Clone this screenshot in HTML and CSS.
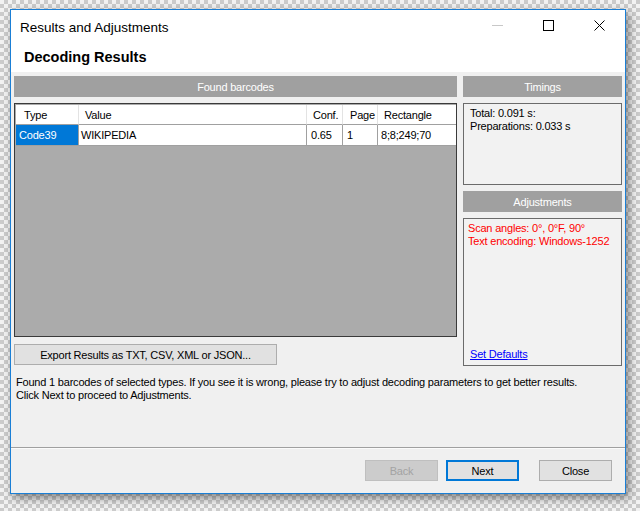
FILE: index.html
```html
<!DOCTYPE html>
<html>
<head>
<meta charset="utf-8">
<title>Results and Adjustments</title>
<link rel="stylesheet" href="styles.css">
</head>
<body>
<div class="window">
  <div class="titlebar">
    <span class="title">Results and Adjustments</span>
    <div class="controls">
      <span class="ctl"><svg width="11" height="11" viewBox="0 0 11 11"><line x1="0" y1="5.5" x2="11" y2="5.5" stroke="#c8c8c8" stroke-width="1"/></svg></span>
      <span class="ctl"><svg width="11" height="11" viewBox="0 0 11 11"><rect x="0.5" y="0.5" width="10" height="10" fill="none" stroke="#000" stroke-width="1"/></svg></span>
      <span class="ctl"><svg width="11" height="11" viewBox="0 0 11 11"><path d="M0.5 0.5 L10.5 10.5 M10.5 0.5 L0.5 10.5" stroke="#000" stroke-width="1" fill="none"/></svg></span>
    </div>
  </div>
  <div class="header"><h1 class="heading">Decoding Results</h1></div>
  <div class="content">
    <div class="panes">
      <div class="left">
        <div class="bar">Found barcodes</div>
        <div class="grid">
          <table class="results">
            <thead>
              <tr><th class="c-type">Type</th><th class="c-value">Value</th><th class="c-conf">Conf.</th><th class="c-page">Page</th><th class="c-rect">Rectangle</th></tr>
            </thead>
            <tbody>
              <tr><td class="c-type sel">Code39</td><td class="c-value">WIKIPEDIA</td><td class="c-conf">0.65</td><td class="c-page">1</td><td class="c-rect">8;8;249;70</td></tr>
            </tbody>
          </table>
        </div>
        <button class="btn export">Export Results as TXT, CSV, XML or JSON...</button>
      </div>
      <div class="right">
        <div class="bar">Timings</div>
        <div class="box timings">
          <div>Total: 0.091 s:</div>
          <div>Preparations: 0.033 s</div>
        </div>
        <div class="bar">Adjustments</div>
        <div class="box adjust">
          <div class="red">Scan angles: 0°, 0°F, 90°</div>
          <div class="red">Text encoding: Windows-1252</div>
          <a class="link" href="#">Set Defaults</a>
        </div>
      </div>
    </div>
    <p class="info">Found 1 barcodes of selected types. If you see it is wrong, please try to adjust decoding parameters to get better results.<br>Click Next to proceed to Adjustments.</p>
  </div>
  <div class="footer">
    <button class="btn disabled">Back</button>
    <button class="btn default">Next</button>
    <button class="btn close">Close</button>
  </div>
</div>
</body>
</html>
```
FILE: styles.css
```css
html, body {
  margin: 0;
  padding: 0;
}
body {
  width: 640px;
  height: 511px;
  overflow: hidden;
  background: repeating-conic-gradient(#cbcbcb 0 25%, #f2f2f2 0 50%) 0 0 / 8px 8px;
  font-family: "Liberation Sans", Arial, sans-serif;
  font-size: 11px;
  letter-spacing: -0.2px;
  color: #000;
}
.window {
  box-sizing: border-box;
  margin: 9px 0 0 10px;
  width: 616px;
  height: 485px;
  border: 1px solid #1a7fd6;
  background: #f0f0f0;
  display: flex;
  flex-direction: column;
  box-shadow: 3px 4px 9px rgba(0, 0, 0, 0.45);
}
.titlebar {
  height: 30px;
  background: #fff;
  display: flex;
  justify-content: space-between;
}
.title {
  font-size: 13.5px;
  letter-spacing: 0;
  line-height: 16px;
  padding: 10px 0 0 9px;
}
.controls {
  display: flex;
}
.ctl {
  width: 51px;
  display: flex;
  align-items: center;
  justify-content: center;
  padding-top: 1px;
}
.ctl svg {
  display: block;
}
.header {
  height: 32px;
  background: #fff;
}
.heading {
  margin: 0;
  padding: 9px 0 0 13px;
  font-size: 14.5px;
  letter-spacing: 0;
  line-height: 17px;
  font-weight: bold;
}
.content {
  flex: 1;
  padding: 4px 2px 0 3px;
}
.panes {
  display: flex;
  gap: 6px;
}
.left {
  width: 443px;
  display: flex;
  flex-direction: column;
}
.right {
  width: 159px;
  display: flex;
  flex-direction: column;
}
.bar {
  box-sizing: border-box;
  height: 21px;
  line-height: 20px;
  padding-top: 1px;
  background: #a0a0a0;
  color: #fff;
  text-align: center;
}
.grid {
  box-sizing: border-box;
  height: 234px;
  margin-top: 6px;
  border: 1px solid #3a3a3a;
  padding: 1px 0 0 1px;
  background: #ababab;
}
.results {
  border-collapse: separate;
  border-spacing: 0;
  table-layout: fixed;
  width: 440px;
}
.results th,
.results td {
  box-sizing: border-box;
  padding: 1px 0 0 0;
  text-align: left;
  font-weight: normal;
  white-space: nowrap;
  overflow: hidden;
  background: #fff;
}
.results th {
  height: 20px;
  line-height: 18px;
  border-right: 1px solid #e3e3e3;
  border-bottom: 1px solid #a0a0a0;
}
.results td {
  height: 21px;
  line-height: 19px;
  border-right: 1px solid #a0a0a0;
  border-bottom: 1px solid #a0a0a0;
}
.results th.c-rect,
.results td.c-rect {
  border-right: none;
}
.c-type { width: 63px; }
.c-value { width: 228px; }
.c-conf { width: 36px; }
.c-page { width: 35px; }
.c-rect { width: 78px; }
th.c-type { padding-left: 8px; }
th.c-value { padding-left: 6px; }
th.c-conf { padding-left: 6px; }
th.c-page { padding-left: 7px; }
th.c-rect { padding-left: 6px; }
td.c-type { padding-left: 3px; }
td.c-value { padding-left: 2px; }
td.c-conf { padding-left: 4px; }
td.c-page { padding-left: 4px; }
td.c-rect { padding-left: 3px; }
.results td.sel {
  background: #0078d7;
  color: #fff;
}
.btn {
  box-sizing: border-box;
  font-family: "Liberation Sans", Arial, sans-serif;
  font-size: 11px;
  letter-spacing: -0.2px;
  color: #000;
  background: #e1e1e1;
  border: 1px solid #adadad;
  padding: 0;
  height: 21px;
  width: 73px;
  margin: 0;
}
.export {
  width: 263px;
  margin-top: 7px;
}
.box {
  box-sizing: border-box;
  margin-top: 6px;
  border: 1px solid #6b6b6b;
  background: #f2f2f2;
  line-height: 13px;
}
.timings {
  height: 82px;
  padding: 3px 0 0 6px;
}
.right .bar + .box + .bar {
  margin-top: 6px;
}
.adjust {
  height: 148px;
  padding: 3px 0 4px 4px;
  display: flex;
  flex-direction: column;
}
.red {
  color: #ff0000;
}
.link {
  margin-top: auto;
  margin-left: 2px;
  color: #0000ff;
  text-decoration: underline;
}
.info {
  margin: 10px 0 0 2px;
  line-height: 13px;
}
.footer {
  box-sizing: border-box;
  height: 46px;
  border-top: 1px solid #a0a0a0;
  box-shadow: inset 0 1px 0 #fbfbfb;
  display: flex;
  justify-content: flex-end;
  padding: 12px 13px 0 0;
}
.footer .btn.disabled {
  background: #cccccc;
  border-color: #bfbfbf;
  color: #a3a3a3;
}
.footer .btn.default {
  margin-left: 8px;
  border: 2px solid #0078d7;
}
.footer .btn.close {
  margin-left: 20px;
}
```
